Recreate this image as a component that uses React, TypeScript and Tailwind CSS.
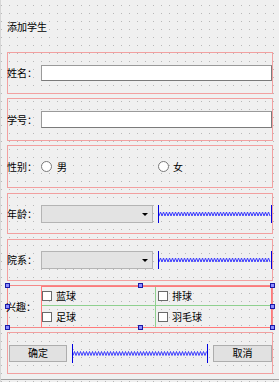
import React from 'react'

// Qt Designer style spring spacer
function Spacer({ w, h = 18 }: { w: number; h?: number }) {
    const mid = h / 2
    const pts: string[] = []
    let i = 0
    for (let x = 1; x <= w - 1; x += 1.5) {
        pts.push(`${x},${i % 2 ? mid - 2 : mid + 2}`)
        i++
    }
    return (
        <svg width={w} height={h} className="block shrink-0">
            <polyline points={pts.join(' ')} fill="none" stroke="#3a3aff" strokeWidth="1" />
            <line x1="0.5" y1="0" x2="0.5" y2={h} stroke="#0000e0" strokeWidth="1" />
            <line x1={w - 0.5} y1="0" x2={w - 0.5} y2={h} stroke="#0000e0" strokeWidth="1" />
        </svg>
    )
}

function Combo() {
    return (
        <div className="relative h-[18px] w-[112px] shrink-0 border border-[#b4b4b4] bg-[#e3e3e3]">
            <div className="absolute right-[4px] top-[7px] h-0 w-0 border-x-[3px] border-t-[3px] border-x-transparent border-t-black"></div>
        </div>
    )
}

function Handle({ pos }: { pos: string }) {
    return <div className={`absolute h-[5px] w-[5px] border border-[#1a1aa8] bg-[#8c8cff] ${pos}`}></div>
}

function Check({ label }: { label: string }) {
    return (
        <div className="flex items-center gap-[4px]">
            <div className="h-[10px] w-[10px] border border-[#6a6a6a] bg-white"></div>
            <span>{label}</span>
        </div>
    )
}

export default function App() {
    return (
        <div className="relative h-[382px] w-[279px] overflow-hidden border-l border-[#d6d6d6] bg-[#f0f0f0] bg-[radial-gradient(circle_at_0.5px_0.5px,#b8b8b8_0.6px,transparent_0.8px)] bg-[length:8px_8px] bg-[position:0px_5px] pl-[6px] font-['Noto_Sans_CJK_SC','Noto_Sans',sans-serif] text-[10px] leading-[14px] text-black">
            <div className="h-[52px] pt-[20px]">添加学生</div>

            <div className="flex h-[42px] w-[266px] items-center border border-[#f2a0a0]">
                <span className="w-[34px] shrink-0 -ml-px">姓名：</span>
                <div className="-mr-px h-[16px] w-[231px] border border-[#9a9a9a] border-b-[#7a7a7a] border-r-[#7a7a7a] bg-white"></div>
            </div>

            <div className="mt-[4px] flex h-[43px] w-[266px] items-center border border-[#f2a0a0]">
                <span className="w-[34px] shrink-0 -ml-px">学号：</span>
                <div className="-mr-px h-[17px] w-[231px] border border-[#9a9a9a] border-b-[#7a7a7a] border-r-[#7a7a7a] bg-white"></div>
            </div>

            <div className="mt-[4px] flex h-[43px] w-[266px] items-center border border-[#f2a0a0]">
                <span className="w-[34px] shrink-0 -ml-px">性别：</span>
                <div className="flex w-[117px] items-center gap-[5px]">
                    <div className="h-[11px] w-[11px] rounded-full border border-[#7a7a7a] bg-white"></div>
                    <span>男</span>
                </div>
                <div className="flex items-center gap-[4px]">
                    <div className="h-[11px] w-[11px] rounded-full border border-[#7a7a7a] bg-white"></div>
                    <span>女</span>
                </div>
            </div>

            <div className="mt-[5px] flex h-[41px] w-[266px] items-center border border-[#f2a0a0]">
                <span className="w-[34px] shrink-0 -ml-px">年龄：</span>
                <Combo />
                <div className="ml-[5px] -mr-px">
                    <Spacer w={114} />
                </div>
            </div>

            <div className="mt-[5px] flex h-[42px] w-[266px] items-center border border-[#f2a0a0]">
                <span className="w-[34px] shrink-0 -ml-px">院系：</span>
                <Combo />
                <div className="ml-[5px] -mr-px">
                    <Spacer w={114} />
                </div>
            </div>

            <div className="relative mt-[4px] flex h-[43px] w-[266px] items-start border border-[#f48a8a]">
                <span className="w-[34px] shrink-0 self-center -ml-[2px] mr-px">兴趣：</span>
                <div className="-mr-px grid h-[42px] w-[231px] grid-cols-[113px_1px_1fr] grid-rows-[18px_1px_1fr] border border-[#ff7a7a]">
                    <div className="flex items-center"><Check label="蓝球" /></div>
                    <div className="bg-[#8fd08f]"></div>
                    <div className="flex items-center pl-[2px]"><Check label="排球" /></div>
                    <div className="col-span-3 bg-[#8fd08f]"></div>
                    <div className="flex items-center"><Check label="足球" /></div>
                    <div className="bg-[#8fd08f]"></div>
                    <div className="flex items-center pl-[2px]"><Check label="羽毛球" /></div>
                </div>
                <Handle pos="-left-[3px] -top-[3px]" />
                <Handle pos="left-[130px] -top-[3px]" />
                <Handle pos="left-[262px] -top-[3px]" />
                <Handle pos="-left-[3px] top-[18px]" />
                <Handle pos="left-[262px] top-[18px]" />
                <Handle pos="-left-[3px] top-[39px]" />
                <Handle pos="left-[130px] top-[39px]" />
                <Handle pos="left-[262px] top-[39px]" />
            </div>

            <div className="mt-[4px] flex h-[42px] w-[266px] items-center border border-[#f2a0a0]">
                <button className="ml-px h-[17px] w-[58px] shrink-0 border border-[#adadad] bg-[#e1e1e1] text-center">确定</button>
                <div className="ml-[5px]">
                    <Spacer w={136} h={19} />
                </div>
                <button className="ml-[5px] h-[17px] w-[59px] shrink-0 border border-[#adadad] bg-[#e1e1e1] text-center">取消</button>
            </div>

            <div className="-ml-[6px] mt-[5px] h-px w-[279px] bg-[#a0a0a0]"></div>
        </div>
    )
}
